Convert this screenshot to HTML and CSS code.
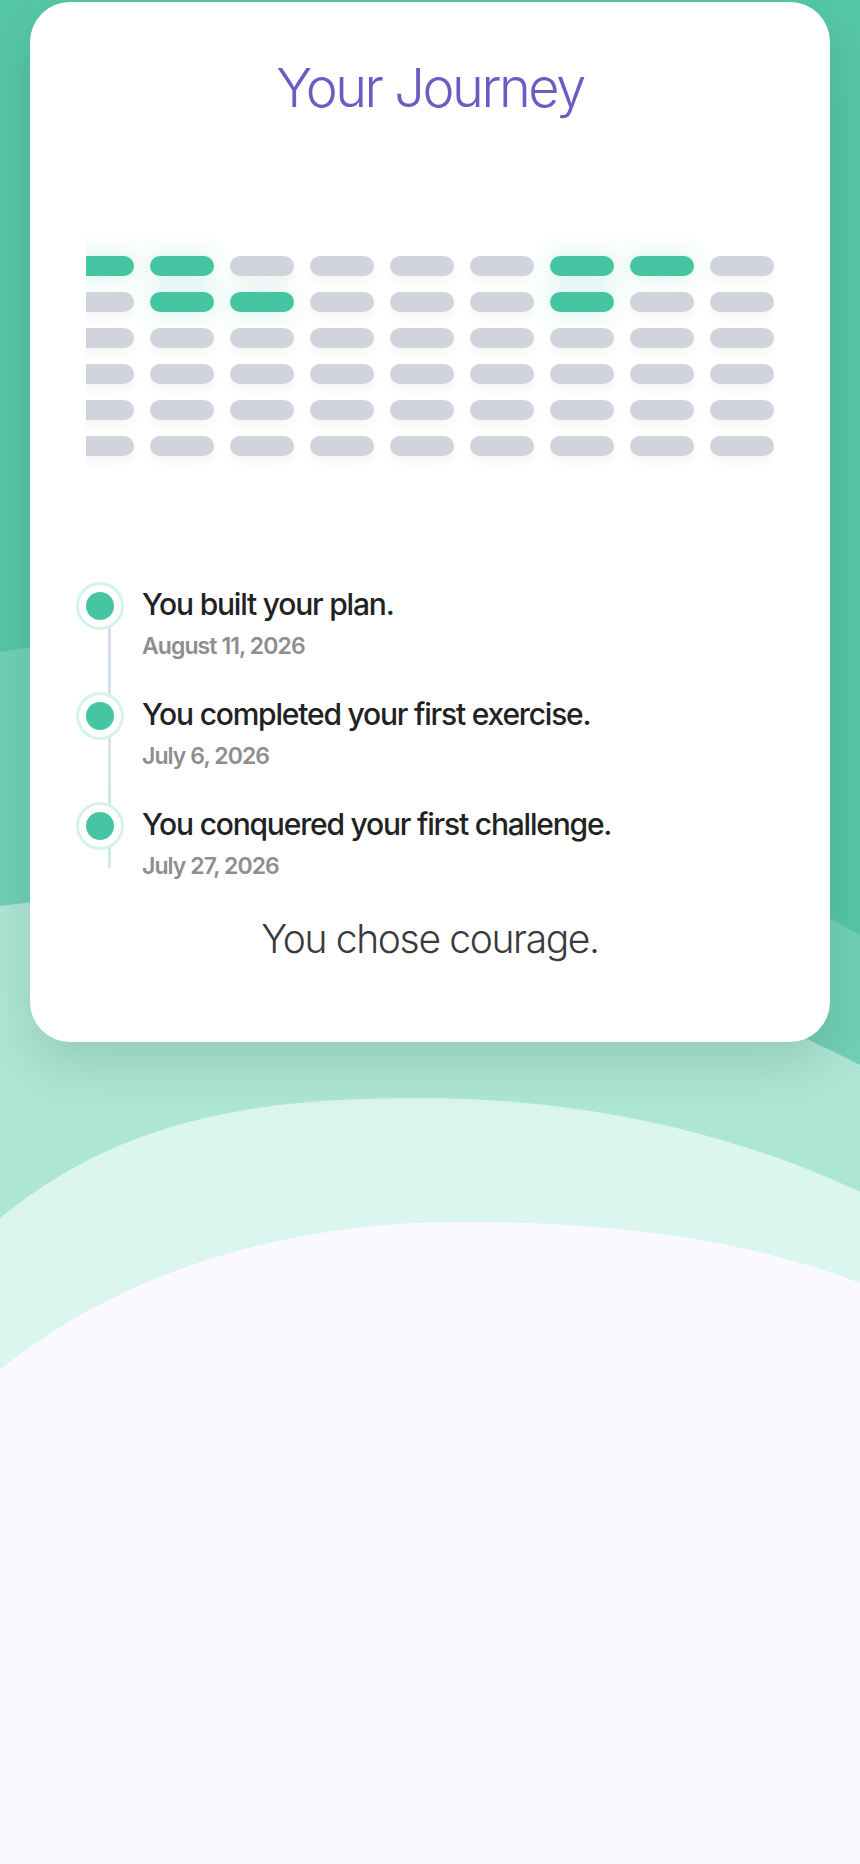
FILE: index.html
```html
<!DOCTYPE html>
<html lang="en">
<head>
    <meta charset="UTF-8">
    <meta name="viewport" content="width=device-width, initial-scale=1.0">
    <title>Your Journey</title>
    <link rel="stylesheet" href="styles.css">
</head>
<body>
    <div class="page">
        <svg class="waves" viewBox="0 0 860 1864" preserveAspectRatio="none">
            <path d="M0,652 C250,610 550,760 860,935 V1864 H0 Z" fill="#72d0b5"/>
            <path d="M0,906 C200,880 500,880 860,1065 V1864 H0 Z" fill="#aee6d5"/>
            <path d="M0,1218 C120,1120 250,1098 420,1098 C600,1098 750,1140 860,1192 V1864 H0 Z" fill="#daf6ee"/>
            <path d="M0,1370 C110,1280 270,1222 460,1222 C640,1222 760,1245 860,1283 V1864 H0 Z" fill="#fafafe"/>
        </svg>

        <div class="card">
            <h1 class="title">Your Journey</h1>

            <div class="weeks">
                <div class="week"><div class="bar on"></div><div class="bar"></div><div class="bar"></div><div class="bar"></div><div class="bar"></div><div class="bar"></div></div>
                <div class="week"><div class="bar on"></div><div class="bar on"></div><div class="bar"></div><div class="bar"></div><div class="bar"></div><div class="bar"></div></div>
                <div class="week"><div class="bar"></div><div class="bar on"></div><div class="bar"></div><div class="bar"></div><div class="bar"></div><div class="bar"></div></div>
                <div class="week"><div class="bar"></div><div class="bar"></div><div class="bar"></div><div class="bar"></div><div class="bar"></div><div class="bar"></div></div>
                <div class="week"><div class="bar"></div><div class="bar"></div><div class="bar"></div><div class="bar"></div><div class="bar"></div><div class="bar"></div></div>
                <div class="week"><div class="bar"></div><div class="bar"></div><div class="bar"></div><div class="bar"></div><div class="bar"></div><div class="bar"></div></div>
                <div class="week"><div class="bar on"></div><div class="bar on"></div><div class="bar"></div><div class="bar"></div><div class="bar"></div><div class="bar"></div></div>
                <div class="week"><div class="bar on"></div><div class="bar"></div><div class="bar"></div><div class="bar"></div><div class="bar"></div><div class="bar"></div></div>
                <div class="week"><div class="bar"></div><div class="bar"></div><div class="bar"></div><div class="bar"></div><div class="bar"></div><div class="bar"></div></div>
            </div>

            <ul class="timeline">
                <li class="step">
                    <span class="dot"></span>
                    <div>
                        <div class="step-title">You built your plan.</div>
                        <div class="step-date">August 11, 2026</div>
                    </div>
                </li>
                <li class="step">
                    <span class="dot"></span>
                    <div>
                        <div class="step-title">You completed your first exercise.</div>
                        <div class="step-date">July 6, 2026</div>
                    </div>
                </li>
                <li class="step">
                    <span class="dot"></span>
                    <div>
                        <div class="step-title">You conquered your first challenge.</div>
                        <div class="step-date">July 27, 2026</div>
                    </div>
                </li>
            </ul>

            <p class="closing">You chose courage.</p>
        </div>
    </div>
</body>
</html>
```

FILE: styles.css
```css
* { margin: 0; padding: 0; box-sizing: border-box; }
body {
    background: #55c7a6;
    font-family: Inter, "Noto Sans", sans-serif;
}
.page {
    position: relative;
    height: 1864px;
    padding-top: 2px;
    overflow: hidden;
}
.waves {
    position: absolute;
    top: 0;
    left: 0;
    width: 100%;
    height: 100%;
}
.card {
    position: relative;
    margin: 0 30px;
    padding: 53px 56px 80px;
    background: #fff;
    border-radius: 40px;
    box-shadow: 0 24px 50px rgba(0, 50, 35, 0.14);
}
.title {
    font-size: 54px;
    line-height: 66px;
    font-weight: 300;
    letter-spacing: -0.045em;
    color: #6b5cc4;
    text-align: center;
}
.weeks {
    display: flex;
    justify-content: flex-end;
    gap: 16px;
    margin-top: 115px;
    padding: 20px 0;
    overflow: hidden;
}
.week {
    display: flex;
    flex-direction: column;
    flex-shrink: 0;
    gap: 16px;
}
.bar {
    width: 64px;
    height: 20px;
    border-radius: 10px;
    background: #d1d4dc;
    box-shadow: 0 6px 10px rgba(0, 0, 0, 0.04);
}
.bar.on {
    background: #45c5a2;
    box-shadow: 0 0 26px rgba(69, 197, 162, 0.28);
}
.timeline {
    position: relative;
    list-style: none;
    margin-top: 110px;
}
.timeline::before {
    content: "";
    position: absolute;
    left: 22px;
    top: 20px;
    height: 262px;
    width: 3px;
    border-radius: 2px;
    background: linear-gradient(#d8dbf0, #cfece4);
}
.step {
    display: flex;
    gap: 28px;
    height: 110px;
}
.dot {
    position: relative;
    flex-shrink: 0;
    width: 28px;
    height: 28px;
    margin-top: 6px;
    border-radius: 50%;
    background: #45c5a2;
    box-shadow: 0 0 0 7px #fff, 0 0 0 10px #d6f3ea;
}
.step-title {
    font-size: 30px;
    line-height: 36px;
    font-weight: 500;
    letter-spacing: -0.04em;
    color: #222;
}
.step-date {
    margin-top: 10px;
    font-size: 23px;
    line-height: 28px;
    font-weight: 600;
    letter-spacing: -0.04em;
    color: #8e8e8e;
}
.closing {
    font-size: 39px;
    line-height: 46px;
    font-weight: 300;
    letter-spacing: -0.035em;
    color: #3a3a3a;
    text-align: center;
}
```
